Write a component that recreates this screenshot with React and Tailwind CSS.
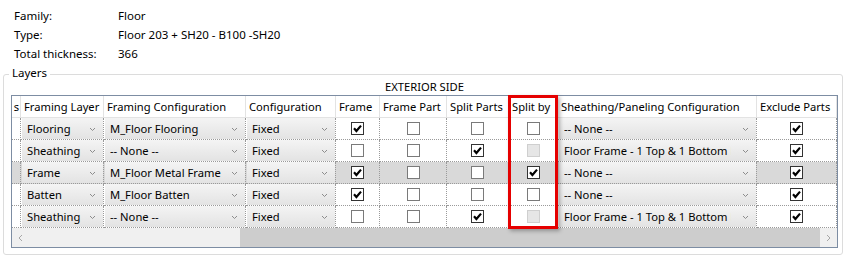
import React from "react";

const rows = [
  { layer: "Flooring", conf: "M_Floor Flooring", frame: true, framePart: false, split: false, splitBy: "off", sheath: "-- None --", excl: true },
  { layer: "Sheathing", conf: "-- None --", frame: false, framePart: false, split: true, splitBy: "disabled", sheath: "Floor Frame - 1 Top & 1 Bottom Plate", excl: true },
  { layer: "Frame", conf: "M_Floor Metal Frame", frame: true, framePart: false, split: false, splitBy: "on", sheath: "-- None --", excl: true, selected: true },
  { layer: "Batten", conf: "M_Floor Batten", frame: true, framePart: false, split: false, splitBy: "off", sheath: "-- None --", excl: true },
  { layer: "Sheathing", conf: "-- None --", frame: false, framePart: false, split: true, splitBy: "disabled", sheath: "Floor Frame - 1 Top & 1 Bottom Plate", excl: true },
];

const headers = [
  "Framing Layer",
  "Framing Configuration",
  "Configuration",
  "Frame",
  "Frame Part",
  "Split Parts",
  "Split by",
  "Sheathing/Paneling Configuration",
  "Exclude Parts",
];

const Chevron = () => (
  <svg width="7" height="5" viewBox="0 0 7 5" className="shrink-0">
    <path d="M1 1 L3.5 3.5 L6 1" fill="none" stroke="#8c8c8c" strokeWidth="1" />
  </svg>
);

const Dropdown = ({ value, textWidth }) => (
  <div className="h-full border-r border-b border-dotted border-[#9a9a9a] pl-[1px]">
    <div className="h-full flex items-center justify-between bg-linear-to-b from-[#f4f4f4] to-[#e3e3e3] pl-[5px] pr-[7px] pt-[1px]">
      <span className={`overflow-hidden whitespace-nowrap ${textWidth}`}>{value}</span>
      <Chevron />
    </div>
  </div>
);

const Checkbox = ({ state }) => {
  if (state === "disabled") {
    return <div className="w-[13px] h-[13px] border border-[#cfcfcf] bg-[#e6e6e6]" />;
  }
  const on = state === true || state === "on";
  return (
    <div className={`w-[13px] h-[13px] border bg-white flex items-center justify-center ${on ? "border-[#333333]" : "border-[#7a7a7a]"}`}>
      {on && (
        <svg width="11" height="11" viewBox="0 0 11 11">
          <path d="M2 5.3 L4.4 8 L9 2.6" fill="none" stroke="#000" strokeWidth="2.2" />
        </svg>
      )}
    </div>
  );
};

const CheckCell = ({ state }) => (
  <div className="h-full border-r border-b border-dotted border-[#9a9a9a] flex items-center justify-center">
    <Checkbox state={state} />
  </div>
);

export default function App() {
  return (
    <div className="w-[845px] h-[255px] bg-white overflow-hidden text-[11.2px] text-black font-['Noto_Sans',sans-serif]">
      {/* family info */}
      <div className="pt-[6px] pl-[14px] grid grid-cols-[104px_auto] leading-[19px] text-[11.5px]">
        <div>Family:</div>
        <div>Floor</div>
        <div>Type:</div>
        <div>Floor 203 + SH20 - B100 -SH20</div>
        <div>Total thickness:</div>
        <div>366</div>
      </div>

      {/* Layers group */}
      <div className="relative mt-[11px] ml-[3px] w-[840px] h-[181px] border border-[#dcdcdc] rounded-[3px]">
        <div className="absolute top-[-9px] left-[5px] px-[3px] bg-white leading-[14px] text-[11.5px]">Layers</div>

        <div className="ml-[7px] w-[827px] h-[20px] pt-[5px] leading-[14px] text-center">EXTERIOR SIDE</div>

        <div className="relative ml-[7px] w-[827px] border border-[#7d8da3]">
          <div className="grid grid-cols-[9px_83px_142px_90px_44px_67px_62px_49px_199px_80px] grid-rows-[22px_22px_22px_22px_22px_22px]">
            {/* header */}
            <div className="border-r border-b border-[#e3e3e3] overflow-hidden flex justify-end items-center pt-[1px]">
              <span className="mr-[1px]">s</span>
            </div>
            {headers.map((h) => (
              <div key={h} className="border-r border-b border-[#e3e3e3] px-[3px] pt-[1px] flex items-center whitespace-nowrap overflow-hidden">
                {h}
              </div>
            ))}

            {rows.map((r, i) => (
              <React.Fragment key={i}>
                <div className={`border-r border-b border-dotted border-[#9a9a9a] ${r.selected ? "bg-[#d9d9d9]" : "bg-white"}`} />
                <div className={r.selected ? "bg-[#d9d9d9]" : ""}>
                  <Dropdown value={r.layer} textWidth="w-[62px]" />
                </div>
                <div className={r.selected ? "bg-[#d9d9d9]" : ""}>
                  <Dropdown value={r.conf} textWidth="w-[120px]" />
                </div>
                <div className={r.selected ? "bg-[#d9d9d9]" : ""}>
                  <Dropdown value="Fixed" textWidth="w-[70px]" />
                </div>
                <div className={r.selected ? "bg-[#d9d9d9]" : ""}>
                  <CheckCell state={r.frame} />
                </div>
                <div className={r.selected ? "bg-[#d9d9d9]" : ""}>
                  <CheckCell state={r.framePart} />
                </div>
                <div className={r.selected ? "bg-[#d9d9d9]" : ""}>
                  <CheckCell state={r.split} />
                </div>
                <div className={r.selected ? "bg-[#d9d9d9]" : ""}>
                  <CheckCell state={r.splitBy} />
                </div>
                <div className={r.selected ? "bg-[#d9d9d9]" : ""}>
                  <Dropdown value={r.sheath} textWidth="w-[167px]" />
                </div>
                <div className={r.selected ? "bg-[#d9d9d9]" : ""}>
                  <CheckCell state={r.excl} />
                </div>
              </React.Fragment>
            ))}
          </div>

          {/* horizontal scrollbar */}
          <div className="flex h-[19px] bg-[#f0f0f0]">
            <div className="w-[17px] flex items-center justify-center">
              <svg width="5" height="8" viewBox="0 0 5 8">
                <path d="M4 1 L1 4 L4 7" fill="none" stroke="#a6a6a6" strokeWidth="1" />
              </svg>
            </div>
            <div className="w-[211px]" />
            <div className="flex-1 bg-[#cdcdcd]" />
            <div className="w-[17px] flex items-center justify-center">
              <svg width="5" height="8" viewBox="0 0 5 8">
                <path d="M1 1 L4 4 L1 7" fill="none" stroke="#a6a6a6" strokeWidth="1" />
              </svg>
            </div>
          </div>

          {/* highlight around Split by column */}
          <div className="absolute left-[496px] top-[-1px] w-[50px] h-[134px] border-[3px] border-[#e50000] shadow-[2px_2px_4px_rgba(0,0,0,0.3)] pointer-events-none" />
        </div>
      </div>
    </div>
  );
}
